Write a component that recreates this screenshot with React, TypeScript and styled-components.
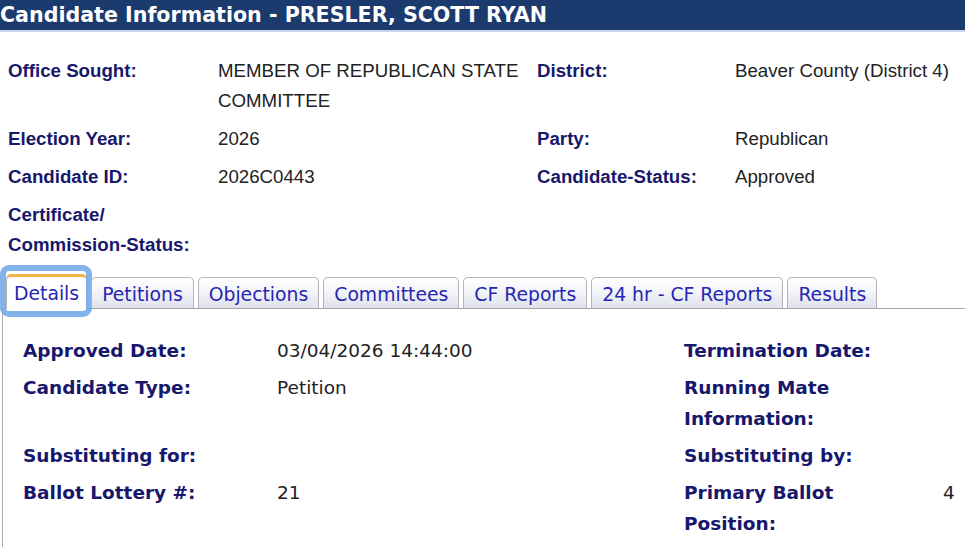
import * as React from 'react';
import { createGlobalStyle, styled } from 'styled-components';

const GlobalStyle = createGlobalStyle`
  html, body {
    margin: 0;
    padding: 0;
    background: #ffffff;
    overflow: hidden;
  }
  body {
    width: 965px;
    height: 547px;
  }
`;

const Page = styled.div`
  width: 965px;
  height: 547px;
  display: flex;
  flex-direction: column;
`;

const Header = styled.h1`
  margin: 0;
  height: 30px;
  padding-left: 0;
  background: #1b3a6d;
  border-bottom: 2px solid #c9d5e9;
  color: #ffffff;
  font-family: 'DejaVu Sans', Verdana, sans-serif;
  font-weight: bold;
  font-size: 20.6px;
  line-height: 31px;
  white-space: nowrap;
`;

const InfoGrid = styled.div<{ $font: string; $size: number; $cols: string }>`
  display: grid;
  grid-template-columns: ${(p) => p.$cols};
  font-family: ${(p) => p.$font};
  font-size: ${(p) => p.$size}px;
`;

const TopGrid = styled(InfoGrid)`
  margin-top: 20px;
  padding-left: 8px;
  line-height: 30px;
`;

const Cell = styled.div<{ $pad: number }>`
  padding: ${(p) => p.$pad}px 0;
`;

const Label = styled(Cell)`
  color: #17176c;
  font-weight: bold;
`;

const Value = styled(Cell)<{ $indent?: number }>`
  color: #222222;
  padding-left: ${(p) => p.$indent ?? 0}px;
`;

const TabBar = styled.div`
  margin-top: 10px;
  display: flex;
  align-items: flex-end;
  gap: 4px;
  padding-left: 6px;
  border-bottom: 1px solid #a3a3a3;
`;

const Tab = styled.div<{ $active?: boolean }>`
  position: relative;
  box-sizing: border-box;
  font-family: 'DejaVu Sans', Verdana, sans-serif;
  font-size: 18.8px;
  color: #2626b2;
  white-space: nowrap;
  border: 1px solid #b4b4b4;
  border-bottom: none;
  border-radius: 5px 5px 0 0;
  padding: ${(p) => (p.$active ? '2px 7px 0' : '2px 10px 0')};
  height: ${(p) => (p.$active ? 35 : 31)}px;
  line-height: 29px;
  margin-bottom: ${(p) => (p.$active ? -1 : 0)}px;
  background: ${(p) =>
    p.$active
      ? '#ffffff'
      : 'linear-gradient(180deg, #ffffff 0%, #f4f5f9 45%, #dfe2ec 100%)'};
  border-top: ${(p) => (p.$active ? '3px solid #f3b24a' : '1px solid #b4b4b4')};
  box-shadow: ${(p) => (p.$active ? 'none' : 'inset 0 1px 0 #ffffff')};

  ${(p) =>
    p.$active &&
    `
    &::after {
      content: '';
      position: absolute;
      top: -12px;
      left: -7px;
      right: -6px;
      bottom: -8px;
      border: 6px solid rgba(110, 165, 232, 0.85);
      border-radius: 9px;
      pointer-events: none;
    }
  `}
`;

const Panel = styled.div`
  flex: 1;
  margin-left: 2px;
  border-left: 1px solid #a8a8a8;
  padding: 23px 0 0 20px;
`;

const LowerGrid = styled(InfoGrid)`
  line-height: 31px;
`;

const tabs = [
  'Details',
  'Petitions',
  'Objections',
  'Committees',
  'CF Reports',
  '24 hr - CF Reports',
  'Results',
];

const topRows: [string, string, string, string][] = [
  ['Office Sought:', 'MEMBER OF REPUBLICAN STATE COMMITTEE', 'District:', 'Beaver County (District 4)'],
  ['Election Year:', '2026', 'Party:', 'Republican'],
  ['Candidate ID:', '2026C0443', 'Candidate-Status:', 'Approved'],
  ['Certificate/ Commission-Status:', '', '', ''],
];

const detailRows: [string, string, string, string][] = [
  ['Approved Date:', '03/04/2026 14:44:00', 'Termination Date:', ''],
  ['Candidate Type:', 'Petition', 'Running Mate Information:', ''],
  ['Substituting for:', '', 'Substituting by:', ''],
  ['Ballot Lottery #:', '21', 'Primary Ballot Position:', '4'],
];

export default function App() {
  return (
    <Page>
      <GlobalStyle />
      <Header>Candidate Information - PRESLER, SCOTT RYAN</Header>

      <TopGrid
        $font="'Liberation Sans', Arial, sans-serif"
        $size={18.7}
        $cols="210px 319px 198px 1fr"
      >
        {topRows.map(([l1, v1, l2, v2]) => (
          <React.Fragment key={l1}>
            <Label $pad={4}>{l1}</Label>
            <Value $pad={4}>{v1}</Value>
            <Label $pad={4}>{l2}</Label>
            <Value $pad={4}>{v2}</Value>
          </React.Fragment>
        ))}
      </TopGrid>

      <TabBar>
        {tabs.map((t, i) => (
          <Tab key={t} $active={i === 0}>
            {t}
          </Tab>
        ))}
      </TabBar>

      <Panel>
        <LowerGrid
          $font="'DejaVu Sans', Verdana, sans-serif"
          $size={18.5}
          $cols="254px 407px 220px 1fr"
        >
          {detailRows.map(([l1, v1, l2, v2]) => (
            <React.Fragment key={l1}>
              <Label $pad={3}>{l1}</Label>
              <Value $pad={3}>{v1}</Value>
              <Label $pad={3}>{l2}</Label>
              <Value $pad={3} $indent={39}>
                {v2}
              </Value>
            </React.Fragment>
          ))}
        </LowerGrid>
      </Panel>
    </Page>
  );
}
